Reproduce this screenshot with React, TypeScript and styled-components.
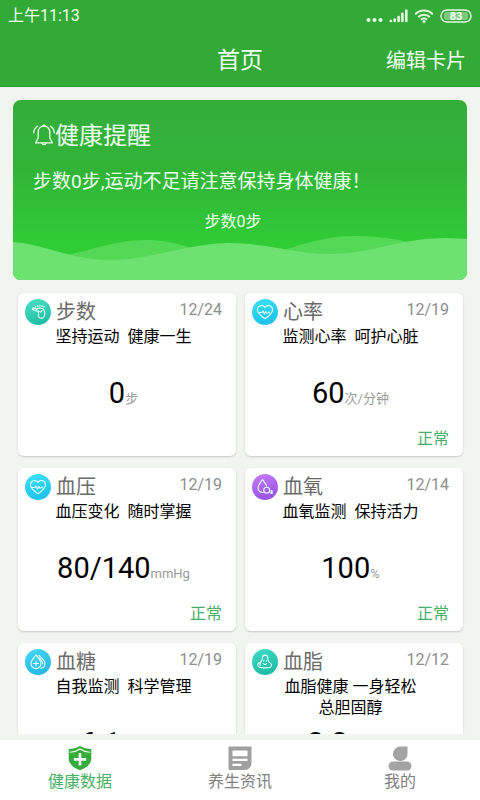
import React from 'react';
import styled, { createGlobalStyle } from 'styled-components';

const GlobalStyle = createGlobalStyle`
  * { box-sizing: border-box; }
  body {
    margin: 0;
    background: #f2f4f1;
    font-family: Roboto, "Noto Sans CJK SC", sans-serif;
  }
  h1, h2, h3, p { margin: 0; font-weight: 400; }
`;

const Screen = styled.div`
  display: flex;
  flex-direction: column;
  height: 100vh;
  background: #f2f4f1;
`;

const TopBar = styled.header`
  background: #33aa38;
  color: #f4fff2;
  border-bottom: 1px solid #2a9a30;
`;

const StatusBar = styled.div`
  display: flex;
  align-items: center;
  justify-content: space-between;
  height: 32px;
  padding: 0 8px;
  font-size: 16px;
  line-height: 20px;
`;

const StatusIcons = styled.div`
  display: flex;
  align-items: center;
  gap: 6px;
`;

const TitleRow = styled.div`
  display: grid;
  grid-template-columns: 1fr auto 1fr;
  align-items: center;
  height: 54px;
  padding: 4px 14px 0;
`;

const PageTitle = styled.h1`
  grid-column: 2;
  font-size: 23px;
  line-height: 32px;
`;

const EditButton = styled.button`
  justify-self: end;
  padding: 0;
  border: 0;
  background: none;
  color: inherit;
  font-family: inherit;
  font-size: 20px;
  line-height: 32px;
`;

const Content = styled.main`
  flex: 1;
  min-height: 0;
  overflow-y: auto;
  scrollbar-width: none;
  padding: 13px 13px 12px;
`;

const Banner = styled.section`
  position: relative;
  height: 180px;
  padding: 20px;
  overflow: hidden;
  border-radius: 8px;
  background: linear-gradient(#34ad3b, #32b438 40%, #30cc36 80%);
  color: #effff0;
`;

const BannerTitle = styled.h2`
  display: flex;
  align-items: center;
  font-size: 24px;
  line-height: 32px;
`;

const BannerText = styled.p`
  margin-top: 18px;
  font-size: 19px;
  line-height: 24px;
`;

const BannerNote = styled.p`
  margin-top: 18px;
  padding-right: 14px;
  font-size: 16px;
  line-height: 20px;
  text-align: center;
`;

const Waves = styled.svg`
  position: absolute;
  left: 0;
  bottom: 0;
  width: 100%;
  height: 48px;
`;

const Cards = styled.section`
  display: grid;
  grid-template-columns: 1fr 1fr;
  gap: 12px 9px;
  padding: 13px 4px 0 5px;
`;

const Card = styled.article`
  display: flex;
  flex-direction: column;
  height: 163px;
  padding: 5px 14px 7px 7px;
  border-radius: 6px;
  background: #fff;
  box-shadow: 0 1px 2px rgba(0, 0, 0, 0.18);
`;

const CardHead = styled.div`
  display: flex;
  align-items: center;
  height: 28px;
  gap: 5px;
`;

const CardTitle = styled.h3`
  flex: 1;
  color: #6a6a6a;
  font-size: 20px;
  line-height: 26px;
`;

const CardDate = styled.time`
  height: 28px;
  color: #8e8e8e;
  font-size: 16px;
  line-height: 24px;
`;

const CardNote = styled.p`
  min-height: 42px;
  color: #000;
  font-size: 16px;
  line-height: 21px;
  text-align: center;
`;

const NoteLine = styled.span`
  display: block;
  white-space: pre;
`;

const Reading = styled.p`
  margin-top: 5px;
  color: #000;
  font-size: 29px;
  line-height: 40px;
  text-align: center;
`;

const Unit = styled.span`
  color: #999;
  font-size: 13px;
`;

const State = styled.p`
  margin-top: auto;
  color: #48ae69;
  font-size: 16px;
  line-height: 20px;
  text-align: right;
`;

const TabBar = styled.nav`
  display: grid;
  grid-template-columns: repeat(3, 1fr);
  margin-top: 6px;
  height: 60px;
  padding-top: 5px;
  background: #fff;
`;

const Tab = styled.a<{ $active?: boolean }>`
  display: flex;
  flex-direction: column;
  align-items: center;
  color: ${(p) => (p.$active ? '#48b062' : '#808080')};
  font-size: 16px;
  line-height: 22px;
  text-decoration: none;
`;

function BellIcon() {
  return (
    <svg width="22" height="24" viewBox="0 0 22 24" fill="none" stroke="#effff0" strokeWidth="1.3" strokeLinecap="round" strokeLinejoin="round" aria-hidden="true">
      <path d="M11 2.200c-3.700 0-5.800 2.600-5.800 6.200v4.800c0 2.400-1.800 3.200-2.600 5.600h16.800c-.8-2.400-2.600-3.200-2.600-5.600V8.400c0-3.600-2.100-6.200-5.800-6.200z" />
      <path d="M9.800 2a1.300 1.300 0 0 1 2.400 0M9 19.200c.4 1.800 3.600 1.800 4 0" />
      <path d="M4.600 2.200C2.200 3.600.8 5.800.7 8.800M17.400 2.200c2.400 1.400 3.800 3.600 3.900 6.600" />
    </svg>
  );
}

function SystemIcons() {
  return (
    <StatusIcons>
      <svg width="17" height="16" viewBox="0 0 17 16" fill="#e6f8e2" aria-hidden="true">
        <circle cx="2.500" cy="12" r="2" />
        <circle cx="8.500" cy="12" r="2" />
        <circle cx="14.500" cy="12" r="2" />
      </svg>
      <svg width="19" height="16" viewBox="0 0 19 16" stroke="#e6f8e2" strokeWidth="2.600" strokeLinecap="round" aria-hidden="true">
        <path d="M1.800 13h.2M5.700 11.500v1.500M9.600 9v4M13.400 5.800v7.200M17.300 2.500v10.500" />
      </svg>
      <svg width="20" height="16" viewBox="0 0 20 16" fill="none" stroke="#e6f8e2" strokeWidth="2" aria-hidden="true">
        <path d="M1.200 6.200a12.500 12.500 0 0 1 17.600 0M4.200 9a8.300 8.300 0 0 1 11.600 0M7 11.700a4.400 4.400 0 0 1 6 0" />
        <circle cx="10" cy="13.500" r="1.500" fill="#e6f8e2" stroke="none" />
      </svg>
      <svg width="32" height="16" viewBox="0 0 32 16" aria-label="83%">
        <rect x="1" y="2" width="30" height="12" rx="6" fill="none" stroke="#e6f8e2" strokeWidth="1.500" />
        <rect x="4" y="4" width="24" height="8" rx="3" fill="#7ccb7b" />
        <text x="16" y="12" textAnchor="middle" fontSize="11" fontWeight="700" fill="#fff">83</text>
      </svg>
    </StatusIcons>
  );
}

type IconKind = 'steps' | 'heart' | 'oxygen' | 'sugar' | 'lipid';

const iconColors: Record<IconKind, [string, string]> = {
  steps: ['#4de0c6', '#22bfa6'],
  heart: ['#3fe0f4', '#1fc3ec'],
  oxygen: ['#c67cf6', '#9a55ea'],
  sugar: ['#48d8f4', '#25b9e6'],
  lipid: ['#3fdcc4', '#1fbca8'],
};

const iconShapes: Record<IconKind, React.ReactNode> = {
  steps: (
    <>
      <path d="M11.500 10c2-1 4-1.300 6-.5 2.500 1.300 3 6 1.300 8.500-1.500 2-4.600 1.600-5.300-.6-.5-1.600.5-2.600-.2-4-.7-1.300-2.300-1.500-1.800-3.400z" />
      <path d="M12 10.500 8 8.500 7.500 10.500 11.300 12M13.500 12c1 1.600 3 1.300 3.500-.5" />
      <path d="M10.500 7.300v.8M12.700 6.500v1M14.900 6.200v1M17.100 6.500v.9M19 7.300l-.2.800" />
    </>
  ),
  heart: (
    <>
      <path d="M13 19.800c-3.400-2.300-7.500-5.200-7.500-9 0-4.800 5.600-5.400 7.500-2.400 1.900-3 7.500-2.400 7.500 2.400 0 3.800-4.100 6.700-7.500 9z" />
      <path d="M6.500 13.500H10l1-1.500 1.500 3 1.300-2.500 1 1.500h1l.8-1 .8.800" />
    </>
  ),
  oxygen: (
    <>
      <path d="M12 18c-3.500 1-6-1-6-4 0-3 2.500-5.500 4.500-8.500 2 2.700 3.500 4.500 4.200 6.700" />
      <circle cx="14.700" cy="16.300" r="3" />
      <path d="M18.700 17c.4-.8 1.700-.5 1.500.4-.1.600-1.200 1-1.500 1.700h1.800" />
    </>
  ),
  sugar: (
    <>
      <path d="M11 6c2 2.700 5 5.300 5 8.600a5 5 0 0 1-10 0C6 11.300 9 8.700 11 6z" />
      <path d="M11 12v5M8.500 14.500h5M14 6.500c2.600 2.500 6 5 6 8 0 2.600-1.700 4.500-4.200 4.700M14.500 9c2 2.200 3.300 3.700 3.300 5.700" />
    </>
  ),
  lipid: (
    <>
      <path d="M10.300 9c.2-3.800 5.300-3.800 5.600 0 .1 1.700-.3 2.500.6 3.500 1.200 1.400 3.300 1.900 3 4-.4 2.400-3 2.500-5 2-1.500.8-2.500.8-4 0-2.200.4-4.500-.3-4.700-2.300-.1-1.700 1-2.800 2.600-2.700 1.500-1 1.900-2.500 1.900-4.500z" />
      <path d="M11.500 14.500c.5 1.300 2.500 1.300 3 0M11.700 11.500v.5M14.400 11.500v.5M8.300 14.500c-.6.500-.6 1.300 0 1.800" />
    </>
  ),
};

function RoundIcon({ kind }: { kind: IconKind }) {
  const id = React.useId();
  const [from, to] = iconColors[kind];
  return (
    <svg width="26" height="26" viewBox="0 0 26 26" aria-hidden="true">
      <linearGradient id={id} x1="0" y1="0" x2="0.300" y2="1">
        <stop offset="0" stopColor={from} />
        <stop offset="1" stopColor={to} />
      </linearGradient>
      <circle cx="13" cy="13" r="13" fill={`url(#${id})`} />
      <g fill="none" stroke="#eafffd" strokeWidth="1.100" strokeLinecap="round" strokeLinejoin="round">
        {iconShapes[kind]}
      </g>
    </svg>
  );
}

function ShieldIcon() {
  return (
    <svg width="26" height="26" viewBox="0 0 26 26" aria-hidden="true">
      <path d="M13 1c3.300 2 7 3 11.300 3v9.500c0 5.500-5 9.500-11.300 11.800C6.700 23 1.700 19 1.700 13.500V4C6 4 9.700 3 13 1z" fill="#35ac3b" />
      <path d="M2.900 7.200C6.500 7.200 10 6 13 4c3 2 6.500 3.200 10.100 3.200" fill="none" stroke="#fff" strokeWidth="1.100" />
      <path d="M13 8.300v12.200M6.900 14.400h12.200" stroke="#fff" strokeWidth="2.600" />
    </svg>
  );
}

function NewsIcon() {
  return (
    <svg width="26" height="26" viewBox="0 0 26 26" aria-hidden="true">
      <path d="M1.500 1.500h22a1 1 0 0 1 1 1V18c0 4-3 7-7 7h-15a1 1 0 0 1-1-1z" fill="#a0a0a0" />
      <path d="M5.500 5.500h15v5.800h-15zM5.500 13.800h15V16h-15zM5.500 18.800h9V21h-9z" fill="#fff" />
    </svg>
  );
}

function UserIcon() {
  return (
    <svg width="26" height="26" viewBox="0 0 26 26" fill="#a3a3a3" aria-hidden="true">
      <path d="M13 1.500h7.500V8A7.300 7.300 0 1 1 13 1.500z" />
      <rect x="1.500" y="16.500" width="23" height="9" rx="4.500" />
    </svg>
  );
}

interface Metric {
  icon: IconKind;
  title: string;
  date: string;
  notes: string[];
  value: string;
  unit: string;
  state?: string;
}

const metrics: Metric[] = [
  { icon: 'steps', title: '步数', date: '12/24', notes: ['坚持运动  健康一生'], value: '0', unit: '步' },
  { icon: 'heart', title: '心率', date: '12/19', notes: ['监测心率  呵护心脏'], value: '60', unit: '次/分钟', state: '正常' },
  { icon: 'heart', title: '血压', date: '12/19', notes: ['血压变化  随时掌握'], value: '80/140', unit: 'mmHg', state: '正常' },
  { icon: 'oxygen', title: '血氧', date: '12/14', notes: ['血氧监测  保持活力'], value: '100', unit: '%', state: '正常' },
  { icon: 'sugar', title: '血糖', date: '12/19', notes: ['自我监测  科学管理'], value: '6.1', unit: 'mmol/L', state: '正常' },
  { icon: 'lipid', title: '血脂', date: '12/12', notes: ['血脂健康 一身轻松', '总胆固醇'], value: '3.2', unit: 'mmol/L', state: '正常' },
];

function MetricCard({ metric }: { metric: Metric }) {
  return (
    <Card>
      <CardHead>
        <RoundIcon kind={metric.icon} />
        <CardTitle>{metric.title}</CardTitle>
        <CardDate>{metric.date}</CardDate>
      </CardHead>
      <CardNote>
        {metric.notes.map((line) => (
          <NoteLine key={line}>{line}</NoteLine>
        ))}
      </CardNote>
      <Reading>
        {metric.value}
        <Unit>{metric.unit}</Unit>
      </Reading>
      {metric.state && <State>{metric.state}</State>}
    </Card>
  );
}

export default function App() {
  return (
    <Screen>
      <GlobalStyle />
      <TopBar>
        <StatusBar>
          <span>上午11:13</span>
          <SystemIcons />
        </StatusBar>
        <TitleRow>
          <PageTitle>首页</PageTitle>
          <EditButton type="button">编辑卡片</EditButton>
        </TitleRow>
      </TopBar>
      <Content>
        <Banner>
          <Waves viewBox="0 0 454 48" preserveAspectRatio="none" aria-hidden="true">
            <path d="M0 31C50 31 90 8 132 8c43 0 58 18 93 19 40 0 65-23 119-23 51 0 76 16 110 24v20H0z" fill="#53d955" />
            <path d="M0 10c30 2 60 18 95 18 45 0 75-16 120-17 40 0 65 11 102 11 43 0 68-16 117-16l20 1v41H0z" fill="#6de270" />
          </Waves>
          <BannerTitle>
            <BellIcon />
            健康提醒
          </BannerTitle>
          <BannerText>步数0步,运动不足请注意保持身体健康！</BannerText>
          <BannerNote>步数0步</BannerNote>
        </Banner>
        <Cards>
          {metrics.map((metric) => (
            <MetricCard key={metric.title} metric={metric} />
          ))}
        </Cards>
      </Content>
      <TabBar>
        <Tab href="#health" $active aria-current="page">
          <ShieldIcon />
          健康数据
        </Tab>
        <Tab href="#news">
          <NewsIcon />
          养生资讯
        </Tab>
        <Tab href="#me">
          <UserIcon />
          我的
        </Tab>
      </TabBar>
    </Screen>
  );
}
